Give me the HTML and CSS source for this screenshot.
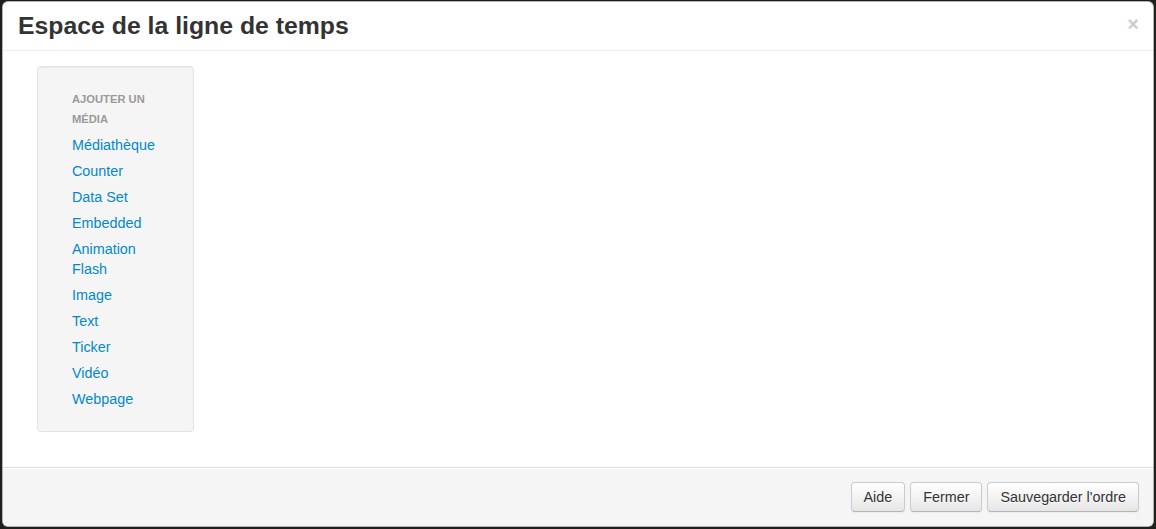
FILE: index.html
```html
<!DOCTYPE html>
<html lang="fr">
<head>
<meta charset="utf-8">
<title>Espace de la ligne de temps</title>
<link rel="stylesheet" href="styles.css">
</head>
<body>
<div class="backdrop">
  <div class="modal">
    <div class="modal-header">
      <h3 class="modal-title">Espace de la ligne de temps</h3>
      <button class="close" type="button">×</button>
    </div>
    <div class="modal-body">
      <div class="well">
        <ul class="nav-list">
          <li class="nav-header">Ajouter un média</li>
          <li><a href="#">Médiathèque</a></li>
          <li><a href="#">Counter</a></li>
          <li><a href="#">Data Set</a></li>
          <li><a href="#">Embedded</a></li>
          <li><a href="#">Animation Flash</a></li>
          <li><a href="#">Image</a></li>
          <li><a href="#">Text</a></li>
          <li><a href="#">Ticker</a></li>
          <li><a href="#">Vidéo</a></li>
          <li><a href="#">Webpage</a></li>
        </ul>
      </div>
    </div>
    <div class="modal-footer">
      <button class="btn" type="button">Aide</button>
      <button class="btn" type="button">Fermer</button>
      <button class="btn" type="button">Sauvegarder l'ordre</button>
    </div>
  </div>
</div>
</body>
</html>
```

FILE: styles.css
```css
* { box-sizing: border-box; }
html, body {
  margin: 0;
  padding: 0;
  height: 100%;
}
body {
  background: #1f1f1c;
  font-family: "Liberation Sans", Arial, Helvetica, sans-serif;
  font-size: 14px;
  line-height: 20px;
  color: #333;
}
.backdrop {
  height: 529px;
  padding: 1px 2px 2px 2px;
  display: flex;
}
.modal {
  flex: 1;
  display: flex;
  flex-direction: column;
  background: #fff;
  border: 1px solid rgba(0, 0, 0, 0.3);
  border-radius: 6px;
  overflow: hidden;
}
.modal-header {
  display: flex;
  align-items: flex-start;
  justify-content: space-between;
  padding: 9px 15px;
  border-bottom: 1px solid #eee;
}
.modal-title {
  margin: 0;
  font-size: 24.8px;
  line-height: 30px;
  font-weight: bold;
  color: #333;
}
.close {
  margin-top: 3px;
  margin-right: -1px;
  padding: 0;
  border: 0;
  background: transparent;
  font-family: "Liberation Sans", Arial, sans-serif;
  font-size: 20px;
  line-height: 20px;
  font-weight: bold;
  color: #000;
  opacity: 0.2;
  text-shadow: 0 1px 0 #fff;
  cursor: pointer;
}
.modal-body {
  flex: 1;
  padding: 15px 15px 15px 34px;
}
.well {
  width: 157px;
  padding: 19px;
  margin-bottom: 20px;
  background: #f5f5f5;
  border: 1px solid #e3e3e3;
  border-radius: 4px;
  box-shadow: inset 0 1px 1px rgba(0, 0, 0, 0.05);
}
.nav-list {
  list-style: none;
  margin: 0;
  padding: 0 15px;
}
.nav-list > li > a,
.nav-list .nav-header {
  display: block;
  margin: 0 -15px;
  padding: 3px 15px;
}
.nav-header {
  font-size: 11.2px;
  font-weight: bold;
  line-height: 20px;
  color: #999;
  text-transform: uppercase;
  text-shadow: 0 1px 0 rgba(255, 255, 255, 0.5);
}
.nav-list > li > a {
  color: #0088cc;
  font-size: 14.35px;
  text-decoration: none;
  line-height: 20px;
  text-shadow: 0 1px 0 rgba(255, 255, 255, 0.5);
}
.modal-footer {
  display: flex;
  justify-content: flex-end;
  gap: 5px;
  padding: 14px 14px 14px;
  background: #f5f5f5;
  border-top: 1px solid #ddd;
  box-shadow: inset 0 1px 0 #fff;
}
.btn {
  font-family: "Liberation Sans", Arial, sans-serif;
  font-size: 14.35px;
  line-height: 20px;
  padding: 4px 12px;
  color: #333;
  text-shadow: 0 1px 1px rgba(255, 255, 255, 0.75);
  background: linear-gradient(to bottom, #ffffff, #e6e6e6);
  border: 1px solid #cccccc;
  border-bottom-color: #b3b3b3;
  border-radius: 4px;
  box-shadow: inset 0 1px 0 rgba(255, 255, 255, 0.2), 0 1px 2px rgba(0, 0, 0, 0.05);
  cursor: pointer;
}
```
